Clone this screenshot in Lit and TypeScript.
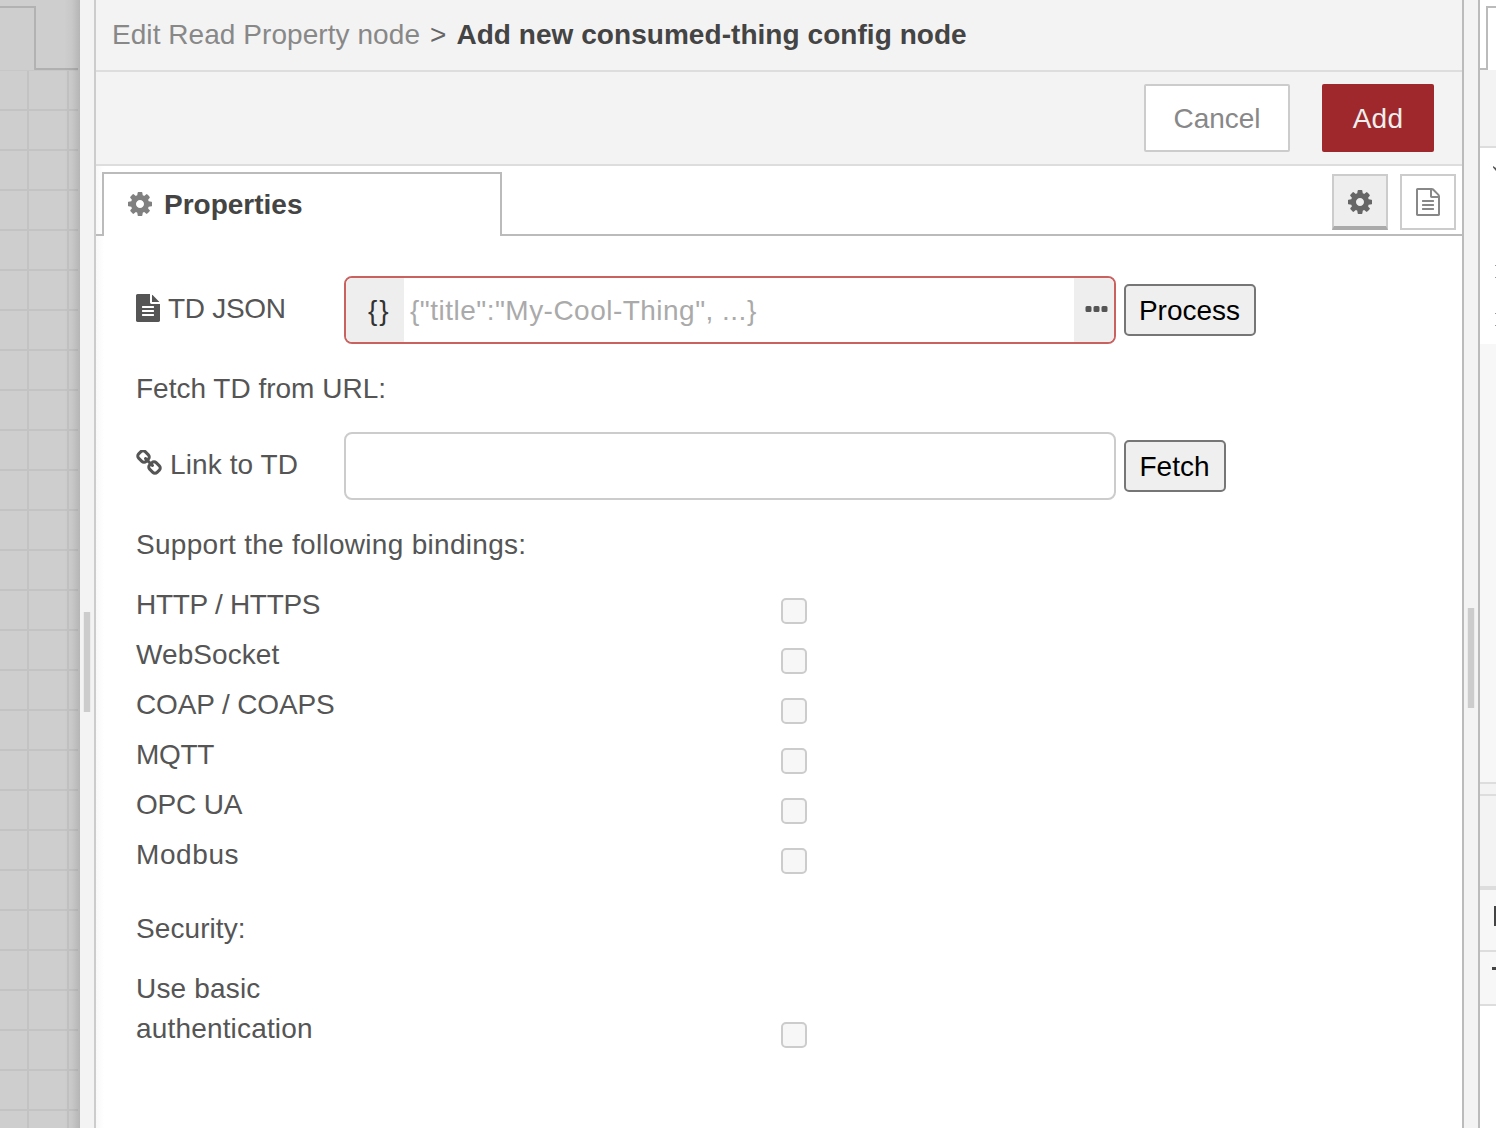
import { LitElement, html, css, svg } from "lit";
import { customElement, property } from "lit/decorators.js";
import { styleMap } from "lit/directives/style-map.js";

const ICONS = {
  cog: {
    box: "128 128 1536 1536",
    d: "M1152 896q0-106-75-181t-181-75-181 75-75 181 75 181 181 75 181-75 75-181zm512-109v222q0 12-8 23t-20 13l-185 28q-19 54-39 91 35 50 107 138 10 12 10 25t-9 23q-27 37-99 108t-94 71q-12 0-26-9l-138-108q-44 23-91 38-16 136-29 186-7 28-36 28h-222q-14 0-24.5-8.5t-11.5-21.5l-28-184q-49-16-90-37l-141 107q-10 9-25 9-14 0-25-11-126-114-165-168-7-10-7-23 0-12 8-23 15-21 51-66.5t54-70.5q-27-50-41-99l-183-27q-13-2-21-12.5t-8-23.5v-222q0-12 8-23t19-13l186-28q14-46 39-92-40-57-107-138-10-12-10-24 0-10 9-23 26-36 98.5-107.5t94.5-71.5q13 0 26 10l138 107q44-23 91-38 16-136 29-186 7-28 36-28h222q14 0 24.5 8.500t11.500 21.500l28 184q49 16 90 37l142-107q9-9 24-9 13 0 25 10 129 119 165 170 7 8 7 22 0 12-8 23-15 21-51 66.500t-54 70.500q26 50 41 98l183 28q13 2 21 12.500t8 23.500z",
  },
  file: {
    box: "128 0 1536 1792",
    d: "M1596 476q14 14 28 36h-472v-472q22 14 36 28zm-476 164h544v1056q0 40-28 68t-68 28h-1344q-40 0-68-28t-28-68v-1600q0-40 28-68t68-28h800v544q0 40 28 68t68 28zm160 736v-64q0-14-9-23t-23-9h-704q-14 0-23 9t-9 23v64q0 14 9 23t23 9h704q14 0 23-9t9-23zm0-256v-64q0-14-9-23t-23-9h-704q-14 0-23 9t-9 23v64q0 14 9 23t23 9h704q14 0 23-9t9-23zm0-256v-64q0-14-9-23t-23-9h-704q-14 0-23 9t-9 23v64q0 14 9 23t23 9h704q14 0 23-9t9-23z",
  },
  fileOutline: {
    box: "128 0 1536 1792",
    d: "M1596 380q28 28 48 76t20 88v1152q0 40-28 68t-68 28h-1344q-40 0-68-28t-28-68v-1600q0-40 28-68t68-28h896q40 0 88 20t76 48zm-444-244v376h376q-10-29-22-41l-313-313q-12-12-41-22zm384 1528v-1024h-416q-40 0-68-28t-28-68v-416h-768v1536h1280zm-1024-864q0-14 9-23t23-9h704q14 0 23 9t9 23v64q0 14-9 23t-23 9h-704q-14 0-23-9t-9-23v-64zm736 224q14 0 23 9t9 23v64q0 14-9 23t-23 9h-704q-14 0-23-9t-9-23v-64q0-14 9-23t23-9h704zm0 256q14 0 23 9t9 23v64q0 14-9 23t-23 9h-704q-14 0-23-9t-9-23v-64q0-14 9-23t23-9h704z",
  },
  chain: {
    box: "64 64 1664 1664",
    d: "M1520 1216q0-40-28-68l-208-208q-28-28-68-28-42 0-72 32 3 3 19 18.500t21.500 21.500 15 19 13 25.500 3.500 27.500q0 40-28 68t-68 28q-15 0-27.500-3.500t-25.500-13-19-15-21.500-21.500-18.500-19q-33 31-33 73 0 40 28 68l206 207q27 27 68 27 40 0 68-26l147-146q28-28 28-67zm-703-705q0-40-28-68l-206-207q-28-28-68-28-39 0-68 27l-147 146q-28 28-28 67 0 40 28 68l208 208q27 27 68 27 42 0 72-31-3-3-19-18.500t-21.500-21.500-15-19-13-25.500-3.500-27.500q0-40 28-68t68-28q15 0 27.500 3.500t25.500 13 19 15 21.500 21.500 18.500 19q33-31 33-73zm895 705q0 120-85 203l-147 146q-83 83-203 83-121 0-204-85l-206-207q-83-83-83-203 0-123 88-209l-88-88q-86 88-208 88-120 0-204-84l-208-208q-84-84-84-204t85-203l147-146q83-83 203-83 121 0 204 85l206 207q83 83 83 203 0 123-88 209l88 88q86-88 208-88 120 0 204 84l208 208q84 84 84 204z",
  },
  ellipsis: {
    box: "0 0 22 6",
    d: "M1.500 0h3q1.500 0 1.500 1.500v3q0 1.500-1.500 1.500h-3q-1.500 0-1.500-1.500v-3q0-1.500 1.500-1.500zM9.500 0h3q1.500 0 1.500 1.500v3q0 1.500-1.500 1.500h-3q-1.500 0-1.500-1.500v-3q0-1.500 1.500-1.500zM17.500 0h3q1.500 0 1.500 1.500v3q0 1.500-1.500 1.500h-3q-1.500 0-1.500-1.500v-3q0-1.500 1.500-1.500z",
  },
};

@customElement("ui-icon")
class UiIcon extends LitElement {
  @property() name: keyof typeof ICONS = "cog";
  static styles = css`
    :host { display: block; flex: none; }
    .glyph { display: block; width: 100%; height: 100%; fill: currentColor; }
  `;
  render() {
    const icon = ICONS[this.name];
    return html`<svg class="glyph" viewBox=${icon.box}>${svg`<path d=${icon.d}></path>`}</svg>`;
  }
}

@customElement("workspace-strip")
class WorkspaceStrip extends LitElement {
  static styles = css`
    :host { display: flex; flex-direction: column; position: relative; width: 80px; flex: none; background: #cecece; }
    .tabs { display: flex; height: 70px; box-sizing: border-box; padding-top: 6px; }
    .tab { width: 36px; box-sizing: border-box; border-top: 2px solid #b2b2b2; border-right: 2px solid #b2b2b2; border-bottom-right-radius: 2px; }
    .rest { flex: 1; border-bottom: 2px solid #b0b0b0; margin-left: -1px; margin-right: 2px; }
    .grid {
      flex: 1; margin-right: 2px; border-top: 1px solid #c7c7c7;
      background:
        repeating-linear-gradient(90deg, transparent 0 27px, #c3c3c3 27px 29px, transparent 29px 40px),
        repeating-linear-gradient(180deg, transparent 0 38px, #c3c3c3 38px 40px);
    }
    .shade { position: absolute; top: 0; bottom: 0; right: 0; width: 16px; background: linear-gradient(90deg, rgba(0,0,0,0), rgba(0,0,0,.03) 50%, rgba(0,0,0,.12)); }
  `;
  render() {
    return html`<div class="tabs"><div class="tab"></div><div class="rest"></div></div>
      <div class="grid"></div><div class="shade"></div>`;
  }
}

@customElement("sidebar-strip")
class SidebarStrip extends LitElement {
  static styles = css`
    :host { display: flex; flex-direction: column; width: 16px; flex: none; background: #fff; overflow: hidden; }
    div { box-sizing: border-box; flex: none; }
    .tabs { display: flex; height: 70px; padding-top: 6px; }
    .lead { width: 7px; border-bottom: 2px solid #bbb; }
    .tab { flex: 1; margin-left: -1px; border-top: 2px solid #bbb; border-left: 2px solid #bbb; }
    .header { height: 78px; background: #f3f3f3; border-bottom: 2px solid #ddd; }
    .tree { display: flex; flex-direction: column; align-items: flex-end; height: 196px; padding-top: 18px; }
    .chevron { width: 3px; height: 5px; background: #555; clip-path: polygon(0 0, 100% 40%, 100% 100%, 0 30%); }
    .tick { width: 1px; height: 1px; background: #999; margin-bottom: 11px; }
    .t1 { margin-top: 94px; }
    .t3 { margin-top: 24px; }
    .blank { height: 440px; background: #f7f7f7; border-bottom: 2px solid #ddd; }
    .split { height: 12px; background: #f3f3f3; border-bottom: 2px solid #ddd; }
    .bar { height: 94px; background: #f3f3f3; border-bottom: 4px solid #ddd; }
    .row { display: flex; justify-content: flex-end; background: #f7f7f7; border-bottom: 2px solid #ddd; }
    .r1 { height: 62px; padding-top: 16px; }
    .r2 { height: 54px; padding-top: 15px; }
    .m1 { width: 2px; height: 20px; background: #444; }
    .m2 { width: 4px; height: 3px; background: #444; }
  `;
  render() {
    return html`
      <div class="tabs"><div class="lead"></div><div class="tab"></div></div>
      <div class="header"></div>
      <div class="tree">
        <div class="chevron"></div>
        <div class="tick t1"></div><div class="tick"></div>
        <div class="tick t3"></div><div class="tick"></div>
      </div>
      <div class="blank"></div><div class="split"></div><div class="bar"></div>
      <div class="row r1"><div class="m1"></div></div>
      <div class="row r2"><div class="m2"></div></div>`;
  }
}

@customElement("app-root")
class AppRoot extends LitElement {
  static styles = css`
    :host {
      display: flex; width: 1496px; height: 1128px; overflow: hidden; background: #fff;
      font: 28px/42px "Liberation Sans", Arial, sans-serif; color: #555;
    }
    * { box-sizing: border-box; }
    .handle { flex: none; width: 16px; background: #f3f3f3; display: flex; align-items: flex-start; }
    .left { border-right: 2px solid #ccc; padding: 612px 0 0 4px; }
    .right { width: 18px; border: solid #bbb; border-width: 0 2px; padding: 608px 0 0 4px; }
    .grip { width: 6px; height: 100px; background: #ccc; box-shadow: 0 0 0 1px #ebebeb; clip-path: inset(0 -1px); }
    .panel { width: 1366px; display: flex; flex-direction: column; background: linear-gradient(90deg, #f8f8f8, #fff 8px); }
    .crumbs { flex: none; height: 72px; padding: 14px 0 0 16px; background: #f3f3f3; border-bottom: 2px solid #ddd; white-space: pre; color: #888; display: flex; }
    .from { letter-spacing: .06px; }
    .sep { color: #666; padding: 0 10px; }
    .here { color: #444; font-weight: bold; letter-spacing: .05px; }
    .toolbar { flex: none; height: 94px; padding: 12px 28px 0 0; background: #f3f3f3; border-bottom: 2px solid #ddd; display: flex; justify-content: flex-end; gap: 32px; }
    .btn { font: inherit; height: 68px; padding: 2px 0 0; border-radius: 2px; }
    .cancel { width: 146px; border: 2px solid #ccc; background: #fff; color: #888; }
    .add { width: 112px; border: 0; background: #9e282b; color: #eee; letter-spacing: .3px; }
    .tabs { flex: none; height: 70px; display: flex; padding-top: 6px; }
    .lead { width: 7px; border-bottom: 2px solid #bbb; }
    .tab { width: 400px; margin-left: -1px; border: 2px solid #bbb; border-bottom: 0; background: #fff; display: flex; padding: 10px 0 0 24px; gap: 12px; color: #444; font-weight: bold; }
    .tab .cog { color: #808080; margin-top: 8px; }
    .tools { flex: 1; margin-left: -1px; border-bottom: 2px solid #bbb; display: flex; justify-content: flex-end; gap: 12px; padding: 2px 6px 0 0; }
    .tool { width: 56px; height: 56px; border: 2px solid #ccc; background: #fff; padding: 0; display: flex; align-items: center; justify-content: center; color: #888; }
    .on { background: #eee; border-bottom: 4px solid #aaa; color: #666; }
    .on .cog { margin-top: 2px; }
    .cog { width: 24px; height: 24px; }
    .doc { width: 24px; height: 28px; }
    .link { width: 26px; height: 26px; }
    .form { padding: 40px 0 0 40px; display: flex; flex-direction: column; }
    .field { display: flex; height: 68px; }
    .label { width: 208px; height: 54px; padding-top: 12px; display: flex; gap: 8px; white-space: nowrap; }
    .label .doc, .label .link { margin-top: 6px; }
    .td { letter-spacing: -.3px; }
    .linktext { letter-spacing: .1px; }
    .input { width: 772px; height: 68px; border: 2px solid #ccc; border-radius: 8px; display: flex; overflow: hidden; background: #fff; }
    .bad { border-color: #c9615f; }
    .kind { width: 58px; background: #eee; color: #333; padding: 12px 0 0 22px; letter-spacing: 2px; }
    .hint { flex: 1; color: #aaa; padding: 12px 0 0 6px; white-space: nowrap; letter-spacing: .48px; }
    .more { width: 40px; background: #eee; padding: 28px 0 0 11px; }
    .dots { width: 23px; height: 6px; }
    .act { font: inherit; color: #000; height: 52px; margin: 8px 0 0 8px; padding: 2px 1px 0 0; border: 2px solid #767676; border-radius: 5px; background: #efefef; }
    .process { width: 132px; }
    .fetch { width: 102px; }
    .text { height: 40px; margin: 24px 0; white-space: nowrap; }
    .support { letter-spacing: .29px; }
    .security { letter-spacing: .08px; }
    .bindings { margin-top: -4px; }
    .opt { height: 50px; display: flex; }
    .name { width: 645px; }
    .box { appearance: none; width: 26px; height: 26px; margin: 14px 0 0; border: 2px solid #ccc; border-radius: 5px; background: #f7f7f7; }
    .auth { height: 80px; margin-top: -4px; }
    .auth .box { margin-top: 54px; }
    .wrap { display: block; width: 208px; padding-top: 1px; line-height: 40px; letter-spacing: .17px; }
  `;
  private bindings = [
    { name: "HTTP / HTTPS", tracking: -0.29 },
    { name: "WebSocket", tracking: 0.07 },
    { name: "COAP / COAPS", tracking: -0.14 },
    { name: "MQTT", tracking: -0.3 },
    { name: "OPC UA", tracking: -0.2 },
    { name: "Modbus", tracking: 0.6 },
  ];
  render() {
    return html`
      <workspace-strip></workspace-strip>
      <div class="handle left"><div class="grip"></div></div>
      <main class="panel">
        <div class="crumbs"><span class="from">Edit Read Property node</span><span class="sep">&gt;</span><span class="here">Add new consumed-thing config node</span></div>
        <div class="toolbar"><button class="btn cancel">Cancel</button><button class="btn add">Add</button></div>
        <div class="tabs">
          <div class="lead"></div>
          <div class="tab"><ui-icon class="cog" name="cog"></ui-icon><span class="props">Properties</span></div>
          <div class="tools">
            <button class="tool on"><ui-icon class="cog" name="cog"></ui-icon></button>
            <button class="tool"><ui-icon class="doc" name="fileOutline"></ui-icon></button>
          </div>
        </div>
        <div class="form">
          <div class="field">
            <div class="label"><ui-icon class="doc" name="file"></ui-icon><span class="td">TD JSON</span></div>
            <div class="input bad"><div class="kind">{}</div><div class="hint">{"title":"My-Cool-Thing", ...}</div><div class="more"><ui-icon class="dots" name="ellipsis"></ui-icon></div></div>
            <button class="act process">Process</button>
          </div>
          <div class="text">Fetch TD from URL:</div>
          <div class="field">
            <div class="label"><ui-icon class="link" name="chain"></ui-icon><span class="linktext">Link to TD</span></div>
            <div class="input"></div>
            <button class="act fetch">Fetch</button>
          </div>
          <div class="text support">Support the following bindings:</div>
          <div class="bindings">
            ${this.bindings.map((b) => html`<label class="opt"><span class="name" style=${styleMap({ letterSpacing: `${b.tracking}px` })}>${b.name}</span><input class="box" type="checkbox"></label>`)}
          </div>
          <div class="text security">Security:</div>
          <label class="opt auth"><span class="name"><span class="wrap">Use basic authentication</span></span><input class="box" type="checkbox"></label>
        </div>
      </main>
      <div class="handle right"><div class="grip"></div></div>
      <sidebar-strip></sidebar-strip>`;
  }
}
